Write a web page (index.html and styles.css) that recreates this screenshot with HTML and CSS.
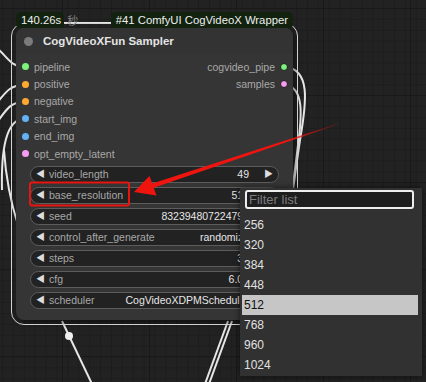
FILE: index.html
```html
<html>
<head>
<meta name="viewport" content="width=device-width, initial-scale=1">
<title>CogVideoXFun Sampler</title>
<link rel="stylesheet" href="styles.css">
</head>
<body>
<div class="canvas">
    <svg class="links" width="426" height="382" viewBox="0 0 426 382">
        <g fill="none" stroke="#e6e6e6" stroke-width="2">
            <path d="M -6 46 C 6 54, 10 67, 24 67"/>
            <path d="M -4 104 C 6 92, 10 85, 24 85"/>
            <path d="M -4 124 C 6 110, 10 102, 24 102"/>
            <path d="M 2 190 C 1 150, 6 119, 24 119"/>
            <path d="M 4 150 C 6 180, 10 200, 18 225"/>
            <path d="M 60 23 L 112 23"/>
            <path d="M 286 67 C 310 70, 307 100, 300 140 C 297 160, 295 175, 293 190"/>
            <path d="M 286 85 C 304 88, 302 115, 298 145 C 296 162, 294 178, 292 190"/>
            <path d="M 62 321 L 92 384"/>
            <path d="M 228 321 L 205 384"/>
            <path d="M 232 321 L 209 384"/>
        </g>
        <circle cx="69" cy="336" r="4" fill="#eee"/>
    </svg>

    <div class="node-wrap">
        <div class="badges">
            <div class="badge-group">
                <span class="badge">140.26s</span>
                <span class="badge-unit">秒</span>
            </div>
            <span class="badge">#41 ComfyUI CogVideoX Wrapper</span>
        </div>
        <div class="node">
            <div class="node-title">
                <span class="title-dot"></span>
                <span>CogVideoXFun Sampler</span>
            </div>
            <div class="slots">
                <div class="slot in"><span class="dot green"></span>pipeline</div>
                <div class="slot out">cogvideo_pipe<span class="dot green"></span></div>
                <div class="slot in"><span class="dot orange"></span>positive</div>
                <div class="slot out">samples<span class="dot pink"></span></div>
                <div class="slot in"><span class="dot orange"></span>negative</div>
                <div class="slot out"></div>
                <div class="slot in"><span class="dot blue"></span>start_img</div>
                <div class="slot out"></div>
                <div class="slot in"><span class="dot blue"></span>end_img</div>
                <div class="slot out"></div>
                <div class="slot in"><span class="dot pink"></span>opt_empty_latent</div>
                <div class="slot out"></div>
            </div>
            <div class="widgets">
                <div class="widget"><span class="arrow">&#9664;</span><span class="w-label">video_length</span><span class="w-value">49</span><span class="arrow">&#9654;</span></div>
                <div class="widget"><span class="arrow">&#9664;</span><span class="w-label">base_resolution</span><span class="w-value">512</span><span class="arrow">&#9654;</span></div>
                <div class="widget"><span class="arrow">&#9664;</span><span class="w-label">seed</span><span class="w-value">832394807224791</span><span class="arrow">&#9654;</span></div>
                <div class="widget"><span class="arrow">&#9664;</span><span class="w-label">control_after_generate</span><span class="w-value">randomize</span><span class="arrow">&#9654;</span></div>
                <div class="widget"><span class="arrow">&#9664;</span><span class="w-label">steps</span><span class="w-value">30</span><span class="arrow">&#9654;</span></div>
                <div class="widget"><span class="arrow">&#9664;</span><span class="w-label">cfg</span><span class="w-value">6.00</span><span class="arrow">&#9654;</span></div>
                <div class="widget"><span class="arrow">&#9664;</span><span class="w-label">scheduler</span><span class="w-value">CogVideoXDPMScheduler</span><span class="arrow">&#9654;</span></div>
            </div>
        </div>
    </div>

    <svg class="annotation" width="426" height="382" viewBox="0 0 426 382">
        <defs>
            <linearGradient id="fade" gradientUnits="userSpaceOnUse" x1="340" y1="123" x2="285" y2="142">
                <stop offset="0" stop-color="#e8120f" stop-opacity="0.1"/>
                <stop offset="1" stop-color="#f0140f"/>
            </linearGradient>
        </defs>
        <rect x="30" y="182.5" width="99" height="23" rx="2" fill="none" stroke="#e8140f" stroke-width="2"/>
        <polygon fill="url(#fade)" points="337.9,123.6 152.3,183.6 149.5,176 134,192 156.5,195.5 153.7,187.8 338.1,124.4"/>
    </svg>

    <div class="menu">
        <div class="filter">Filter list</div>
        <div class="item">256</div>
        <div class="item">320</div>
        <div class="item">384</div>
        <div class="item">448</div>
        <div class="item selected">512</div>
        <div class="item">768</div>
        <div class="item">960</div>
        <div class="item">1024</div>
    </div>
</div>
</body>
</html>
```

FILE: styles.css
```css
body {
    margin: 0;
    padding: 0;
    background: #222;
    font-family: "Liberation Sans", Arial, "Noto Sans CJK SC", sans-serif;
}
.canvas {
    position: relative;
    width: 426px;
    height: 382px;
    overflow: hidden;
    background-color: #222;
    background-image:
        linear-gradient(to right, #191919 1px, transparent 1px),
        linear-gradient(to bottom, #191919 1px, transparent 1px),
        linear-gradient(to right, #1d1d1d 1px, transparent 1px),
        linear-gradient(to bottom, #1d1d1d 1px, transparent 1px);
    background-size: 87px 87px, 87px 87px, 10.9px 10.9px, 10.9px 10.9px;
    background-position: 62px 8px, 62px 8px, 2px 8px, 2px 8px;
}
.links, .annotation {
    position: absolute;
    left: 0;
    top: 0;
    pointer-events: none;
}
.annotation {
    z-index: 5;
}

/* node */
.node-wrap {
    position: absolute;
    left: 16px;
    top: 12px;
    width: 277px;
    z-index: 2;
}
.badges {
    position: relative;
    z-index: 3;
    height: 16px;
    display: flex;
    justify-content: space-between;
    align-items: stretch;
}
.badge-group {
    display: flex;
    align-items: center;
    gap: 3px;
}
.badge {
    display: flex;
    align-items: center;
    height: 16px;
    padding: 0 5px 0 5px;
    background: #12220f;
    color: #eee;
    font-size: 11.3px;
    border-radius: 5px 5px 4px 4px;
}
.badge-group .badge {
    padding: 0 3px 0 5px;
}
.badge-unit {
    color: #808080;
    font-family: "Noto Sans CJK SC", sans-serif;
    font-size: 11px;
    line-height: 16px;
}
.node {
    height: 292px;
    background: #353535;
    border-radius: 8px;
    outline: 1.5px solid #d2d2d2;
    outline-offset: 4px;
    box-shadow: 2px 3px 6px rgba(0, 0, 0, 0.5);
    display: flex;
    flex-direction: column;
    overflow: hidden;
}
.node-title {
    height: 26px;
    display: flex;
    align-items: center;
    gap: 10px;
    padding-left: 8px;
    background: #333;
    color: #e4e4e4;
    font-size: 11.5px;
    font-weight: bold;
    border-radius: 8px 8px 0 0;
}
.title-dot {
    width: 9px;
    height: 9px;
    border-radius: 50%;
    background: #7b7b7b;
}
.slots {
    padding-top: 4px;
    display: grid;
    grid-template-columns: 1fr auto;
    grid-auto-rows: 17.4px;
}
.slot {
    display: flex;
    align-items: center;
    color: #a8a8a8;
    font-size: 10.5px;
}
.slot.in {
    padding-left: 6px;
    gap: 5px;
}
.slot.out {
    justify-content: flex-end;
    padding-right: 5px;
    gap: 5px;
}
.dot {
    width: 7px;
    height: 7px;
    border-radius: 50%;
    box-sizing: border-box;
}
.slot.out .dot {
    width: 8px;
    height: 8px;
    border: 1px solid #1a1a1a;
}
.green { background: #7cf27c; }
.orange { background: #ffa930; }
.blue { background: #62b2f5; }
.pink { background: #f59cf0; }

.widgets {
    margin-top: 3.6px;
    padding: 0 14px;
    display: flex;
    flex-direction: column;
    gap: 4px;
}
.widget {
    height: 17px;
    box-sizing: border-box;
    border: 1px solid #5c5c5c;
    border-radius: 9px;
    background: #222;
    display: flex;
    align-items: center;
    padding: 0 5px 0 5px;
    font-size: 10.5px;
}
.arrow {
    color: #ddd;
    font-size: 9px;
    width: 9px;
    line-height: 1;
}
.w-label {
    margin-left: 4px;
    color: #a8a8a8;
    flex: 1;
    white-space: nowrap;
}
.w-value {
    color: #e6e6e6;
    margin-right: 15px;
    white-space: nowrap;
}

/* dropdown */
.menu {
    position: absolute;
    left: 240px;
    top: 188px;
    width: 182px;
    height: 188px;
    box-sizing: border-box;
    padding: 2px 4px 0 2px;
    background: #313131;
    box-shadow: 0 0 6px rgba(0, 0, 0, 0.6);
    z-index: 4;
}
.filter {
    margin: 0 4px 6px 3px;
    height: 19px;
    box-sizing: border-box;
    border: 2px solid #eee;
    border-radius: 3px;
    background: #1e1e1e;
    color: #7c7c7c;
    font-size: 13px;
    line-height: 15px;
    padding-left: 2px;
}
.item {
    height: 20px;
    line-height: 20px;
    padding-left: 2px;
    color: #e0e0e0;
    font-size: 12px;
}
.item.selected {
    background: #c6c6c6;
    color: #111;
}
```
